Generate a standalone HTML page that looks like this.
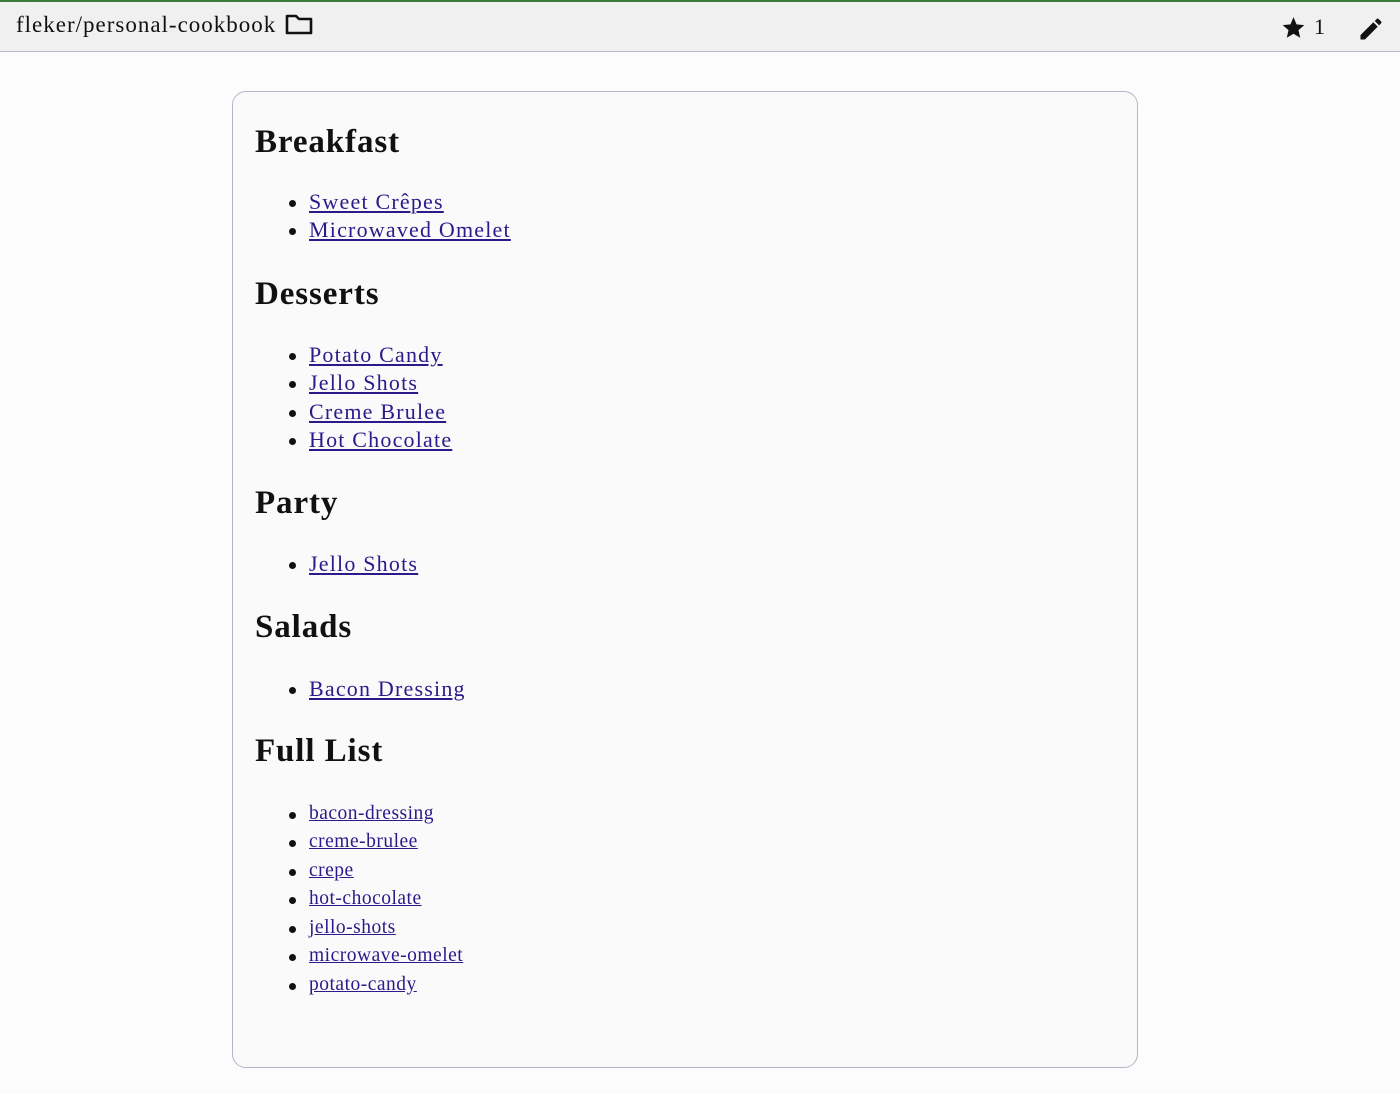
<!DOCTYPE html>
<html><head><meta charset="utf-8"><style>
body{margin:0;background:#fcfcfc;font-family:"Liberation Serif",serif;color:#111;width:1400px;height:1094px;overflow:hidden;position:relative}
.top{position:absolute;left:0;top:0;width:1400px;height:52px;background:#f0f0f0;border-top:2px solid #3a7a3a;border-bottom:1px solid #b8b8c8;box-sizing:border-box}
.title{position:absolute;left:16px;top:10px;font-size:23px;color:#111;letter-spacing:1px}
.card{position:absolute;left:232px;top:91px;width:906px;height:977px;box-sizing:border-box;border:1px solid #b4b4cc;border-radius:14px;background:#fafafa}
h2{position:absolute;left:255px;margin:0;font-size:33px;font-weight:bold;line-height:40px;letter-spacing:0.9px}
.l{position:absolute;left:309px;font-size:22px;line-height:28px;color:#2a1a8a;text-decoration:underline;letter-spacing:1.2px}
.l::before{content:"";position:absolute;left:-20px;top:12px;width:7px;height:7px;border-radius:50%;background:#111}
.s{font-size:19.5px;letter-spacing:0.5px}
</style></head><body>
<div class="top"><div class="title">fleker/personal-cookbook
<svg width="28" height="22" viewBox="0 0 28 22" style="vertical-align:-3px;margin-left:2px"><path d="M2 3h9l3 3h12v14H2z" fill="none" stroke="#111" stroke-width="2.6" stroke-linejoin="round"/></svg></div>
<svg style="position:absolute;left:1280px;top:13px" width="27" height="26" viewBox="0 0 24 24"><path d="M12 17.3l6.2 3.7-1.6-7 5.4-4.7-7.2-.6L12 2 9.2 8.7 2 9.3l5.4 4.7-1.6 7z" fill="#111"/></svg>
<div style="position:absolute;left:1314px;top:12px;font-size:22px">1</div>
<svg style="position:absolute;left:1357px;top:13px" width="28" height="28" viewBox="0 0 24 24"><path d="M3 17.2V21h3.8L17.8 10l-3.8-3.8zM20.7 7c.4-.4.4-1 0-1.4l-2.3-2.3c-.4-.4-1-.4-1.4 0l-1.8 1.8 3.8 3.8z" fill="#111"/></svg>
</div>
<div class="card"></div>
<h2 style="top:122px">Breakfast</h2>
<a class="l" style="top:188px">Sweet Crêpes</a>
<a class="l" style="top:216px">Microwaved Omelet</a>
<h2 style="top:274px">Desserts</h2>
<a class="l" style="top:341px">Potato Candy</a>
<a class="l" style="top:369px">Jello Shots</a>
<a class="l" style="top:398px">Creme Brulee</a>
<a class="l" style="top:426px">Hot Chocolate</a>
<h2 style="top:483px">Party</h2>
<a class="l" style="top:550px">Jello Shots</a>
<h2 style="top:607px">Salads</h2>
<a class="l" style="top:675px">Bacon Dressing</a>
<h2 style="top:731px">Full List</h2>
<a class="l s" style="top:800px">bacon-dressing</a>
<a class="l s" style="top:828px">creme-brulee</a>
<a class="l s" style="top:857px">crepe</a>
<a class="l s" style="top:885px">hot-chocolate</a>
<a class="l s" style="top:914px">jello-shots</a>
<a class="l s" style="top:942px">microwave-omelet</a>
<a class="l s" style="top:971px">potato-candy</a>
</body></html>
